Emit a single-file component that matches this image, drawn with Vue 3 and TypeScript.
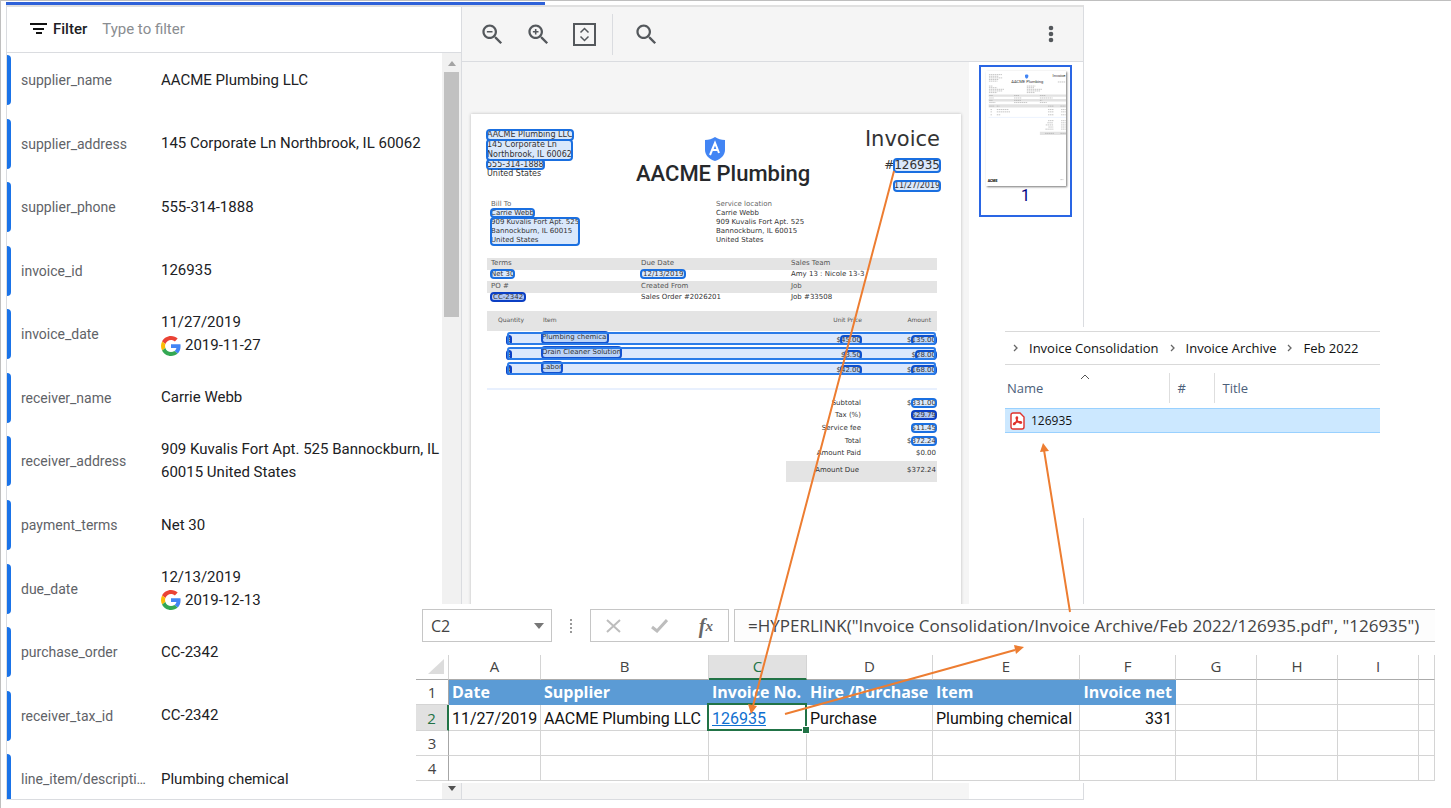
<script setup lang="ts">
import { ref } from 'vue'

interface Field { name: string; lines: string[]; normalized?: string }

const fields: Field[] = [
  { name: 'supplier_name', lines: ['AACME Plumbing LLC'] },
  { name: 'supplier_address', lines: ['145 Corporate Ln Northbrook, IL 60062'] },
  { name: 'supplier_phone', lines: ['555-314-1888'] },
  { name: 'invoice_id', lines: ['126935'] },
  { name: 'invoice_date', lines: ['11/27/2019'], normalized: '2019-11-27' },
  { name: 'receiver_name', lines: ['Carrie Webb'] },
  { name: 'receiver_address', lines: ['909 Kuvalis Fort Apt. 525 Bannockburn, IL', '60015 United States'] },
  { name: 'payment_terms', lines: ['Net 30'] },
  { name: 'due_date', lines: ['12/13/2019'], normalized: '2019-12-13' },
  { name: 'purchase_order', lines: ['CC-2342'] },
  { name: 'receiver_tax_id', lines: ['CC-2342'] },
  { name: 'line_item/descripti…', lines: ['Plumbing chemical'] },
]

const items = [
  { qty: '3', name: 'Plumbing chemical', price: '45.00', amount: '135.00' },
  { qty: '8', name: 'Drain Cleaner Solution', price: '3.50', amount: '28.00' },
  { qty: '4', name: 'Labor', price: '42.00', amount: '168.00' },
]

const totals = [
  { label: 'Subtotal', sign: '$', value: '331.00', kind: 'mark' },
  { label: 'Tax (%)', sign: '', value: '$29.79', kind: 'mark deep' },
  { label: 'Service fee', sign: '', value: '$11.45', kind: 'mark' },
  { label: 'Total', sign: '$', value: '372.24', kind: 'mark' },
  { label: 'Amount Paid', sign: '', value: '$0.00', kind: '' },
]

const columns = ['A', 'B', 'C', 'D', 'E', 'F', 'G', 'H', 'I', '']
const headings = ['Date', 'Supplier', 'Invoice No.', 'Hire /Purchase', 'Item', 'Invoice net']
const filterText = ref('')
const cellName = ref('C2')
const formula = ref('=HYPERLINK("Invoice Consolidation/Invoice Archive/Feb 2022/126935.pdf", "126935")')
</script>

<template>
  <main class="page">
    <div class="progress"></div>
    <section class="viewer">
      <aside class="fields">
        <div class="filter">
          <svg width="18" height="12" viewBox="0 0 18 12"><path fill="#111" d="M0 0h17v2H0zM3 5h11v2H3zM6 9h6v2H6z" /></svg>
          <label for="filter">Filter</label>
          <input id="filter" v-model="filterText" type="text" placeholder="Type to filter" />
        </div>
        <div class="scroller">
          <dl class="list">
            <div v-for="f in fields" :key="f.name" class="field">
              <dt>{{ f.name }}</dt>
              <dd>
                <div v-for="l in f.lines" :key="l">{{ l }}</div>
                <div v-if="f.normalized" class="normalized">
                  <svg width="20" height="20" viewBox="0 0 48 48">
                    <path fill="#ea4335" d="M24 9.5c3.54 0 6.71 1.22 9.21 3.6l6.85-6.85C35.9 2.38 30.47 0 24 0 14.62 0 6.51 5.38 2.56 13.22l7.98 6.19C12.43 13.72 17.74 9.5 24 9.5z" />
                    <path fill="#4285f4" d="M46.98 24.55c0-1.57-.15-3.09-.38-4.55H24v9.02h12.94c-.58 2.96-2.26 5.48-4.78 7.18l7.73 6c4.51-4.18 7.09-10.36 7.09-17.65z" />
                    <path fill="#fbbc05" d="M10.53 28.59c-.48-1.45-.76-2.99-.76-4.59s.27-3.14.76-4.59l-7.98-6.19C.92 16.46 0 20.12 0 24c0 3.88.92 7.54 2.56 10.78l7.97-6.19z" />
                    <path fill="#34a853" d="M24 48c6.48 0 11.93-2.13 15.89-5.81l-7.73-6c-2.15 1.45-4.92 2.3-8.16 2.3-6.26 0-11.57-4.22-13.47-9.91l-7.98 6.19C6.51 42.62 14.62 48 24 48z" />
                  </svg>
                  <span>{{ f.normalized }}</span>
                </div>
              </dd>
            </div>
          </dl>
          <div class="scrollbar">
            <svg width="8" height="5" viewBox="0 0 8 5"><path fill="#a3a3a3" d="M4 0l4 5H0z" /></svg>
            <div class="thumb"></div>
            <svg class="down" width="8" height="5" viewBox="0 0 8 5"><path fill="#505050" d="M0 0h8L4 5z" /></svg>
          </div>
        </div>
      </aside>

      <section class="document">
        <header class="toolbar">
          <button type="button" aria-label="Zoom out">
            <svg width="27" height="27" viewBox="0 0 24 24"><path d="M15.5 14h-.79l-.28-.27C15.41 12.59 16 11.11 16 9.5 16 5.91 13.09 3 9.5 3S3 5.91 3 9.5 5.91 16 9.5 16c1.61 0 3.09-.59 4.23-1.57l.27.28v.79l5 4.99L20.49 19l-4.99-5zm-6 0C7.01 14 5 11.99 5 9.5S7.01 5 9.5 5 14 7.01 14 9.5 11.99 14 9.5 14zM7 8.8h5v1.4H7z" /></svg>
          </button>
          <button type="button" aria-label="Zoom in">
            <svg width="27" height="27" viewBox="0 0 24 24"><path d="M15.5 14h-.79l-.28-.27C15.41 12.59 16 11.11 16 9.5 16 5.91 13.09 3 9.5 3S3 5.91 3 9.5 5.91 16 9.5 16c1.61 0 3.09-.59 4.23-1.57l.27.28v.79l5 4.99L20.49 19l-4.99-5zm-6 0C7.01 14 5 11.99 5 9.5S7.01 5 9.5 5 14 7.01 14 9.5 11.99 14 9.5 14zM7 8.8h1.8V7h1.4v1.8H12v1.4h-1.8V12H8.800v-1.8H7z" /></svg>
          </button>
          <button type="button" aria-label="Fit to page">
            <svg width="23" height="23" viewBox="0 0 23 23"><path class="line" d="M1 1h21v21H1z" stroke-width="2" /><path class="line" d="M7.500 9.500l4-4 4 4M7.500 13.500l4 4 4-4" stroke-width="1.500" /></svg>
          </button>
          <span class="divider"></span>
          <button type="button" aria-label="Search">
            <svg width="27" height="27" viewBox="0 0 24 24"><path d="M15.500 14h-.79l-.28-.27C15.410 12.590 16 11.110 16 9.500 16 5.910 13.090 3 9.500 3S3 5.910 3 9.500 5.910 16 9.500 16c1.610 0 3.090-.59 4.230-1.570l.27.28v.79l5 4.990L20.490 19l-4.990-5zm-6 0C7.010 14 5 11.990 5 9.500S7.010 5 9.500 5 14 7.010 14 9.500 11.990 14 9.500 14z" /></svg>
          </button>
          <button type="button" class="more" aria-label="More options">
            <svg width="6" height="18" viewBox="0 0 6 18"><circle cx="3" cy="3" r="2.300" /><circle cx="3" cy="9" r="2.300" /><circle cx="3" cy="15" r="2.300" /></svg>
          </button>
        </header>

        <div class="stage">
          <div class="canvas">
            <article class="invoice">
              <div class="head">
                <div class="from">
                  <div><span class="mark">AACME Plumbing LLC</span></div>
                  <div><span class="mark block">145 Corporate Ln<br />Northbrook, IL 60062</span></div>
                  <div class="tight"><span class="mark">555-314-1888</span></div>
                  <div class="tight">United States</div>
                </div>
                <div class="brand">
                  <svg width="20" height="24" viewBox="0 0 20 24">
                    <path fill="#4285f4" d="M10 0c3 2 6 3 10 3v10c0 5-4 9-10 11C4 22 0 18 0 13V3c4 0 7-1 10-3z" />
                    <path fill="none" stroke="#fff" stroke-width="2" d="M5 18L10 6l4 10M7 13h6" />
                  </svg>
                  <h1>AACME Plumbing</h1>
                </div>
                <div class="ident">
                  <h2>Invoice</h2>
                  <div class="number">#<span class="mark">126935</span></div>
                  <div class="date"><span class="mark">11/27/2019</span></div>
                </div>
              </div>

              <div class="parties">
                <div>
                  <div class="muted">Bill To</div>
                  <div><span class="mark">Carrie Webb</span></div>
                  <div><span class="mark block">909 Kuvalis Fort Apt. 525<br />Bannockburn, IL 60015<br />United States</span></div>
                </div>
                <div>
                  <div class="muted">Service location</div>
                  <div>Carrie Webb</div>
                  <div>909 Kuvalis Fort Apt. 525</div>
                  <div>Bannockburn, IL 60015</div>
                  <div>United States</div>
                </div>
              </div>

              <div class="meta band"><span>Terms</span><span>Due Date</span><span>Sales Team</span></div>
              <div class="meta values"><span><b class="mark">Net 30</b></span><span><b class="mark wide">12/13/2019</b></span><span>Amy 13 : Nicole 13-3</span></div>
              <div class="meta band"><span>PO #</span><span>Created From</span><span>Job</span></div>
              <div class="meta values last"><span><b class="mark deep wide">CC-2342</b></span><span>Sales Order #2026201</span><span>Job #33508</span></div>

              <table class="items">
                <thead><tr><th>Quantity</th><th>Item</th><th>Unit Price</th><th>Amount</th></tr></thead>
                <tbody>
                  <tr v-for="i in items" :key="i.name">
                    <td><span class="mark deep qty">{{ i.qty }}</span></td>
                    <td><span class="mark">{{ i.name }}</span></td>
                    <td>$<span class="mark">{{ i.price }}</span></td>
                    <td>$<span class="mark">{{ i.amount }}</span></td>
                  </tr>
                </tbody>
              </table>

              <div class="totals">
                <div v-for="t in totals" :key="t.label" class="total">
                  <span>{{ t.label }}</span>
                  <span>{{ t.sign }}<b :class="t.kind">{{ t.value }}</b></span>
                </div>
              </div>
              <div class="total due"><span>Amount Due</span><span>$372.24</span></div>
            </article>
          </div>

          <nav class="pages">
            <button type="button" class="page-thumb" aria-label="Page 1">
              <svg width="80" height="115" viewBox="0 0 490 704">
                <g fill="#e2e2e2"><path d="M16 144h474v14H16zM16 172h474v14H16zM16 204h474v20H16zM330 372h160v20H330z" /></g>
                <g stroke="#a8a8a8" stroke-width="4" stroke-dasharray="9 3" fill="none">
                  <path d="M18 22h80M18 32h60M18 42h84M18 52h60M18 62h52M18 92h24M18 102h50M18 112h92M18 122h84M18 132h50M250 92h52M250 102h44M250 112h92M250 122h84M250 132h50" />
                  <path d="M20 150h24M20 165h28M20 180h20M20 193h38M172 150h30M172 165h44M172 180h42M172 193h80M330 150h34M330 165h78M330 180h14M330 193h42" />
                  <path d="M20 215h30M66 215h16M380 215h34M456 215h30M28 236h8M66 236h74M380 236h34M460 236h28M28 250h8M66 250h84M380 250h34M460 250h28M28 268h8M66 268h24M380 268h34M460 268h28" />
                  <path d="M380 304h34M460 304h28M376 317h36M460 317h28M366 330h46M460 330h28M382 343h30M460 343h28M364 356h50M460 356h28M362 382h54M456 382h32M440 67h48M456 665h18" />
                </g>
                <path fill="#4285f4" d="M249 22c6 0 10 3 10 3v10c0 8-10 12-10 12s-10-4-10-12V25s4-3 10-3z" />
                <path d="M16 284h474" stroke="#e8f0fe" stroke-width="5" />
                <text x="155" y="72" font-size="25" fill="#333">AACME Plumbing</text>
                <text x="408" y="36" font-size="25" fill="#333">Invoice</text>
                <text x="10" y="678" font-size="22" font-weight="900" fill="#111">ACME</text>
              </svg>
              <span>1</span>
            </button>
          </nav>
        </div>
      </section>
    </section>

    <section class="explorer">
      <nav class="crumbs">
        <template v-for="c in ['Invoice Consolidation', 'Invoice Archive', 'Feb 2022']" :key="c">
          <svg width="5" height="8" viewBox="0 0 5 8"><path fill="none" stroke="#666" stroke-width="1.300" d="M1 1l3 3-3 3" /></svg>
          <a href="#">{{ c }}</a>
        </template>
      </nav>
      <table class="files">
        <thead>
          <tr>
            <th class="name">Name<svg width="10" height="6" viewBox="0 0 10 6"><path fill="none" stroke="#555" d="M1 5l4-4 4 4" /></svg></th>
            <th class="num">#</th>
            <th>Title</th>
          </tr>
        </thead>
        <tbody>
          <tr>
            <td colspan="3">
              <div class="file">
                <svg width="15" height="18" viewBox="0 0 15 18">
                  <path fill="#fff" stroke="#e0322c" stroke-width="1.400" d="M3 1h7l4 4v10a2 2 0 0 1-2 2H3a2 2 0 0 1-2-2V3a2 2 0 0 1 2-2z" />
                  <path fill="none" stroke="#e0322c" stroke-width="1.500" d="M7 5c-1.500 0-.5 3 1 4.500s3.500 2.500 3.500 1-5-.8-7 .5c-1.800 1.200-.5 2.500.8.500C6.500 9.500 8.300 5 7 5z" />
                </svg>
                <span>126935</span>
              </div>
            </td>
          </tr>
        </tbody>
      </table>
    </section>

    <section class="sheet">
      <div class="bar">
        <div class="namebox">
          <input v-model="cellName" type="text" aria-label="Cell name" />
          <button type="button" aria-label="Named ranges"><svg width="10" height="6" viewBox="0 0 10 6"><path fill="#777" d="M0 0h10L5 6z" /></svg></button>
        </div>
        <svg class="dots" width="2" height="14" viewBox="0 0 2 14"><path fill="#999" d="M0 0h2v2H0zM0 4h2v2H0zM0 8h2v2H0zM0 12h2v2H0z" /></svg>
        <div class="actions">
          <button type="button" aria-label="Cancel"><svg width="15" height="14" viewBox="0 0 15 14"><path fill="none" stroke="#bdbdbd" stroke-width="2" d="M1 1l13 12M14 1L1 13" /></svg></button>
          <button type="button" aria-label="Enter"><svg width="17" height="14" viewBox="0 0 17 14"><path fill="none" stroke="#bdbdbd" stroke-width="3" d="M1 8l5 4L16 1" /></svg></button>
          <button type="button" class="fx" aria-label="Insert function">f<small>x</small></button>
        </div>
        <input v-model="formula" class="formula" type="text" aria-label="Formula" />
      </div>
      <table class="grid">
        <colgroup><col v-for="n in 11" :key="n" :class="'c' + n" /></colgroup>
        <thead>
          <tr>
            <th class="corner"><svg width="16" height="15" viewBox="0 0 16 15"><path fill="#dcdcdc" d="M16 0v15H0z" /></svg></th>
            <th v-for="c in columns" :key="c" :class="{ active: c === 'C' }">{{ c }}</th>
          </tr>
        </thead>
        <tbody>
          <tr class="titles">
            <th>1</th>
            <td v-for="h in headings" :key="h" :class="{ right: h === 'Invoice net' }">{{ h }}</td>
            <td v-for="n in 4" :key="n" class="blank"></td>
          </tr>
          <tr class="entry">
            <th class="active">2</th>
            <td>11/27/2019</td>
            <td>AACME Plumbing LLC</td>
            <td class="selected"><a href="#">126935</a></td>
            <td>Purchase</td>
            <td>Plumbing chemical</td>
            <td class="right">331</td>
            <td v-for="n in 4" :key="n"></td>
          </tr>
          <tr v-for="r in [3, 4]" :key="r">
            <th>{{ r }}</th>
            <td v-for="n in 10" :key="n"></td>
          </tr>
        </tbody>
      </table>
    </section>

    <svg class="arrows" width="1451" height="808" viewBox="0 0 1451 808">
      <g stroke="#ed7d31" stroke-width="2">
        <path d="M894 171L753 706M785 714L1015 650M1070 612L1044 450" />
      </g>
      <path fill="#ed7d31" d="M751 714l-3-10 9 2zM1024 647l-8 7-2-9zM1043 443l6 8-9 1z" />
    </svg>
  </main>
</template>

<style>
body { margin: 0; background: #fff; }
</style>

<style scoped>
* { box-sizing: border-box; }
button { padding: 0; border: 0; background: none; font: inherit; display: flex; align-items: center; justify-content: center; }
input { padding: 0; border: 0; outline: 0; background: none; min-width: 0; }
svg { display: block; flex: none; }

.page { position: relative; min-height: 100vh; padding: 2px 0 8px 6px; box-shadow: inset 1px 1px 0 #bfbfbf; overflow: hidden; font-family: Roboto, "Liberation Sans", sans-serif; color: #202124; }
.progress { width: 539px; height: 3px; background: #2f62d9; }
.viewer { display: flex; width: calc(100% - 367px); height: calc(100vh - 13px); border: 1px solid #dadce0; border-top: 2px solid #e0e0e0; }

.fields { width: 455px; flex: none; display: flex; flex-direction: column; border-right: 1px solid #dadce0; }
.filter { display: flex; align-items: center; height: 46px; flex: none; padding: 0 0 2px 23px; border-bottom: 1px solid #dadce0; }
.filter label { margin: 0 15px 0 5px; font-weight: 500; font-size: 15px; }
.filter input { flex: 1; font: 15px Roboto, sans-serif; color: #202124; }
.filter input::placeholder { color: #8a8d91; opacity: 1; }
.scroller { flex: 1; min-height: 0; display: flex; overflow: hidden; }
.list { flex: 1; height: 763px; margin: 2px 0 0; display: grid; grid-template-rows: repeat(12, 1fr); }
.field { height: 50px; display: flex; align-items: center; }
.field::before { content: ""; width: 4px; height: 50px; margin-right: 10px; background: #1a73e8; border-radius: 0 4px 4px 0; flex: none; }
dt { width: 130px; margin-right: 10px; flex: none; font-size: 14px; color: #5f6368; white-space: nowrap; }
dd { margin: 0; font-size: 15px; line-height: 23px; white-space: nowrap; }
.normalized { display: flex; align-items: center; gap: 4px; }
.scrollbar { width: 19px; background: #f1f1f1; display: flex; flex-direction: column; align-items: center; padding: 8px 0; }
.scrollbar .thumb { width: 15px; height: 245px; margin-top: 6px; background: #c1c1c1; }
.scrollbar .down { margin-top: auto; }

.document { flex: 1; display: flex; flex-direction: column; min-width: 0; background: #f5f5f5; }
.toolbar { display: flex; align-items: center; height: 55px; flex: none; padding-left: 17px; border-bottom: 1px solid #dadce0; }
.toolbar button { width: 27px; margin-right: 19px; }
.toolbar svg { fill: #54585c; }
.toolbar .line { fill: none; stroke: #54585c; }
.toolbar .divider { width: 1px; height: 41px; margin: 0 20px 0 -5px; background: #dadce0; }
.toolbar .more { margin: 0 19px 0 auto; }
.stage { flex: 1; display: flex; min-height: 0; }
.canvas { flex: 1; min-width: 0; padding: 52px 8px 0 9px; overflow: hidden; }
.pages { width: 114px; padding: 3px 0 0 10px; background: #fff; }
.page-thumb { flex-direction: column; justify-content: flex-start; width: 93px; height: 152px; padding-top: 4px; border: 2px solid #2a66e4; font-size: 16px; line-height: 20px; color: #000080; }
.page-thumb svg { background: #fff; box-shadow: 1px 1px 2px #777; }

.invoice { height: 634px; padding: 16px 24px 0 16px; background: #fff; box-shadow: 0 0 3px #bbb; font: 7px/9px "DejaVu Sans", sans-serif; color: #333; white-space: nowrap; }
.mark { display: inline-block; font-weight: 400; line-height: 8px; background: rgba(26, 115, 232, .16); outline: 2px solid #1a6fe0; outline-offset: -1px; border-radius: 3px; vertical-align: top; }
.mark.block { line-height: inherit; }
.mark.wide { padding: 0 2px; }
.mark.deep { outline-color: #0b3fc4; background: rgba(26, 90, 220, .35); }
.head { display: grid; grid-template-columns: 149px 1fr auto; height: 70px; line-height: 10px; }
.head .from { font-size: 8px; }
.head .from .mark { line-height: 10px; }
.from .tight, .head .from .tight .mark { line-height: 9px; }
.brand { padding-top: 7px; }
.brand svg { margin-left: 69px; }
.brand h1 { margin: 0; font: 500 22px/26px Roboto, sans-serif; color: #26282b; }
.ident { text-align: right; margin-right: -3px; }
.ident h2 { margin: -4px 0 0; font-weight: 400; font-size: 21px; line-height: 26px; }
.number { margin-top: 7px; font-size: 12px; line-height: 13px; }
.number .mark { line-height: 13px; }
.date { margin-top: 9px; font-size: 8px; }
.date .mark { line-height: 10px; }
.parties { display: grid; grid-template-columns: 1fr 1fr; margin-bottom: 13px; }
.parties > div { padding-left: 4px; }
.muted { color: #666; }
.meta { display: grid; grid-template-columns: repeat(3, 1fr); }
.meta span { padding-left: 4px; }
.meta.band { height: 12px; line-height: 11px; background: #e4e4e4; color: #555; }
.meta.values { height: 11px; line-height: 8px; }
.meta.last { height: 18px; }
.items { display: block; border-bottom: 2px solid #e8f0fe; padding-bottom: 11px; }
.items thead, .items tbody { display: block; }
.items tr { display: grid; grid-template-columns: 35px 1fr 100px 75px; }
.items th, .items td { padding: 0; text-align: left; font-weight: 400; }
.items th:nth-child(n+3), .items td:nth-child(n+3) { text-align: right; }
.items thead tr { grid-template-columns: 56px 1fr 100px 75px; height: 20px; line-height: 18px; background: #e4e4e4; color: #555; margin-bottom: 1px; font-size: 6px; }
.items th:first-child { padding-left: 11px; }
.items th:last-child { padding-right: 6px; }
.items tbody tr { height: 13px; margin: 0 1px 2px 20px; line-height: 10px; background: #dce8fc; outline: 2px solid #2a7be8; outline-offset: -2px; border-radius: 3px; }
.items td:nth-child(2) .mark { line-height: 11px; outline-color: #1452cf; }
.items td:nth-child(n+3) { padding-top: 4px; line-height: 8px; }
.items td:nth-child(n+3) .mark { outline-color: #0d50cc; }
.qty { width: 4px; overflow: hidden; margin-top: 4px; }
.totals { display: grid; grid-template-rows: repeat(5, 1fr); height: 63px; margin: 7px 0 1px; }
.total { display: grid; grid-template-columns: 1fr 75px; align-items: center; text-align: right; padding-right: 1px; }
.total b { font-weight: 400; }
.total.due { width: 151px; height: 21px; margin-left: auto; background: #e4e4e4; padding-bottom: 2px; }
.due span:first-child { padding-right: 2px; }

.explorer { position: absolute; left: 1003px; top: 327px; width: 377px; height: 191px; padding: 4px 0 0 2px; background: #fff; font: 13px/18px "Open Sans", sans-serif; color: #111; }
.crumbs { display: flex; align-items: center; gap: 11px; height: 34px; padding-left: 8px; border-top: 1px solid #d9d9d9; border-bottom: 1px solid #d9d9d9; }
.crumbs a { color: inherit; text-decoration: none; }
.files { width: 100%; border-collapse: collapse; table-layout: fixed; margin-top: 8px; }
.files th { height: 30px; padding: 0 0 0 8px; border-left: 1px solid #dedede; text-align: left; font-weight: 400; color: #4c607a; }
.files .name { position: relative; width: 164px; padding-left: 2px; border-left: 0; }
.files .name svg { position: absolute; left: 75px; top: 1px; }
.files .num { width: 45px; }
.files td { padding: 5px 0 0; }
.file { display: flex; align-items: center; gap: 6px; height: 25px; padding-left: 5px; background: #cce8ff; border: 1px solid #99d1ff; border-width: 1px 0; font-size: 12px; }

.sheet { position: absolute; left: 416px; right: 16px; top: 604px; height: 179px; padding-top: 5px; background: #fff; overflow: hidden; font: 16px/20px "Open Sans", sans-serif; color: #444; }
.bar { display: flex; align-items: center; height: 33px; margin: 0 0 13px 6px; }
.bar input { font: inherit; color: inherit; }
.namebox { display: flex; width: 130px; height: 33px; border: 1px solid #c6c6c6; padding: 0 7px 0 8px; }
.namebox input { flex: 1; }
.dots { margin: 0 18px; }
.actions { display: flex; justify-content: space-between; width: 139px; height: 33px; padding: 0 15px; border: 1px solid #c6c6c6; }
.fx { font: italic 700 20px/20px "Liberation Serif", serif; color: #666; }
.fx small { font-size: 15px; }
.bar .formula { flex: 1; height: 33px; margin-left: 5px; padding-left: 13px; border: 1px solid #c6c6c6; border-right: 0; background: #fdfdfd; font-size: 17px; }
.grid { width: 100%; table-layout: fixed; border-collapse: separate; border-spacing: 0; }
.c1 { width: 33px; } .c2 { width: 92px; } .c3 { width: 168px; } .c4 { width: 98px; } .c5 { width: 126px; } .c6 { width: 147px; } .c7 { width: 96px; } .c8, .c9, .c10 { width: 81px; }
.grid th { padding: 0; height: 25px; font-weight: 400; font-size: 15px; line-height: 20px; border-right: 1px solid #d4d4d4; border-bottom: 1px solid #d4d4d4; }
.grid thead th { border-bottom-color: #ababab; padding-bottom: 2px; }
.grid thead th.active { background: #e1e1e1; color: #217346; border-bottom: 2px solid #217346; padding-bottom: 1px; }
.grid tbody th { border-right-color: #a6a6a6; }
.grid tbody th.active { background: #e1e1e1; color: #217346; border-right: 2px solid #217346; }
.corner svg { margin-left: 12px; }
.grid td { padding: 0 3px; height: 25px; line-height: 20px; font-family: Roboto, sans-serif; color: #111; white-space: nowrap; border-right: 1px solid #d4d4d4; border-bottom: 1px solid #d4d4d4; }
.grid .titles td { font: 700 16px/20px "Open Sans", sans-serif; color: #fff; background: #5b9bd5; border-color: #5b9bd5; }
.grid .titles .blank { background: none; border-color: #d4d4d4; }
.grid .entry td { height: 26px; padding-top: 2px; }
.grid .right { text-align: right; }
.grid td.selected { position: relative; }
.selected::before { content: ""; position: absolute; inset: -2px -1px -1px -2px; border: 2px solid #217346; }
.selected::after { content: ""; position: absolute; right: -4px; bottom: -4px; width: 6px; height: 6px; background: #217346; border: 1px solid #fff; box-sizing: content-box; }
.selected a { color: #0f6fd0; }

.arrows { position: absolute; left: 0; top: 0; pointer-events: none; }
</style>
